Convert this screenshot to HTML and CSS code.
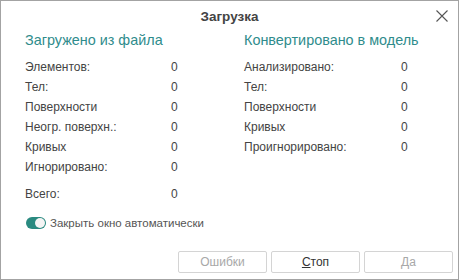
FILE: index.html
```html
<!DOCTYPE html>
<html>
<head>
<meta charset="utf-8">
<link rel="stylesheet" href="styles.css">
</head>
<body>
<div class="window">
  <div class="titlebar">
    <span class="title">Загрузка</span>
    <svg class="close" width="12" height="12" viewBox="0 0 12 12"><path d="M0.5 0.5L11.5 11.5M11.5 0.5L0.5 11.5" stroke="#555" stroke-width="1.1" fill="none"/></svg>
  </div>
  <div class="columns">
    <div class="col col-left">
      <div class="head">Загружено из файла</div>
      <div class="rows">
        <span>Элементов:</span><span>0</span>
        <span>Тел:</span><span>0</span>
        <span>Поверхности</span><span>0</span>
        <span>Неогр. поверхн.:</span><span>0</span>
        <span>Кривых</span><span>0</span>
        <span>Игнорировано:</span><span>0</span>
        <span class="total">Всего:</span><span class="total">0</span>
      </div>
    </div>
    <div class="col col-right">
      <div class="head">Конвертировано в модель</div>
      <div class="rows">
        <span>Анализировано:</span><span>0</span>
        <span>Тел:</span><span>0</span>
        <span>Поверхности</span><span>0</span>
        <span>Кривых</span><span>0</span>
        <span>Проигнорировано:</span><span>0</span>
      </div>
    </div>
  </div>
  <div class="toggle-row">
    <span class="toggle"><span class="knob"></span></span>
    <span class="toggle-label">Закрыть окно автоматически</span>
  </div>
  <div class="buttons">
    <button class="btn disabled">Ошибки</button>
    <button class="btn"><u>С</u>топ</button>
    <button class="btn disabled">Да</button>
  </div>
</div>
</body>
</html>
```

FILE: styles.css
```css
html, body {
  margin: 0;
  padding: 0;
  background: #fff;
}
.window {
  width: 459px;
  height: 280px;
  box-sizing: border-box;
  border: 1px solid #a3a3a3;
  font-family: "Liberation Sans", Arial, sans-serif;
  color: #444;
  display: flex;
  flex-direction: column;
  position: relative;
}
.titlebar {
  height: 30px;
  display: flex;
  align-items: center;
  justify-content: center;
  position: relative;
}
.title {
  font-weight: bold;
  font-size: 13.5px;
  color: #444;
  margin-top: 1px;
}
.close {
  position: absolute;
  right: 10px;
  top: 9px;
}
.columns {
  display: flex;
  padding-left: 24px;
  margin-top: 0;
}
.col-left {
  width: 219px;
}
.head {
  font-size: 14.4px;
  color: #2f8c8c;
  line-height: 18px;
  height: 26px;
}
.rows {
  display: grid;
  font-size: 12px;
  line-height: 20px;
}
.col-left .rows {
  grid-template-columns: 146px auto;
}
.col-right .rows {
  grid-template-columns: 157px auto;
}
.rows .total {
  margin-top: 7px;
}
.toggle-row {
  display: flex;
  align-items: center;
  padding-left: 25px;
  margin-top: 13px;
  gap: 4px;
}
.toggle {
  width: 20px;
  height: 12px;
  border-radius: 6px;
  background: #2a8a80;
  position: relative;
  display: inline-block;
}
.knob {
  position: absolute;
  right: 1px;
  top: 1px;
  width: 10px;
  height: 10px;
  border-radius: 50%;
  background: #f4f4f4;
}
.toggle-label {
  font-size: 11.5px;
  color: #555;
}
.buttons {
  margin-top: auto;
  margin-bottom: 6px;
  display: flex;
  justify-content: flex-end;
  gap: 4px;
  padding-right: 5px;
}
.btn {
  width: 89px;
  height: 22px;
  border: 1px solid #d4d4d4;
  border-radius: 2px;
  background: #fff;
  font-family: "Liberation Sans", Arial, sans-serif;
  font-size: 12px;
  color: #333;
  padding: 0;
}
.btn.disabled {
  color: #a8a8a8;
}
```
